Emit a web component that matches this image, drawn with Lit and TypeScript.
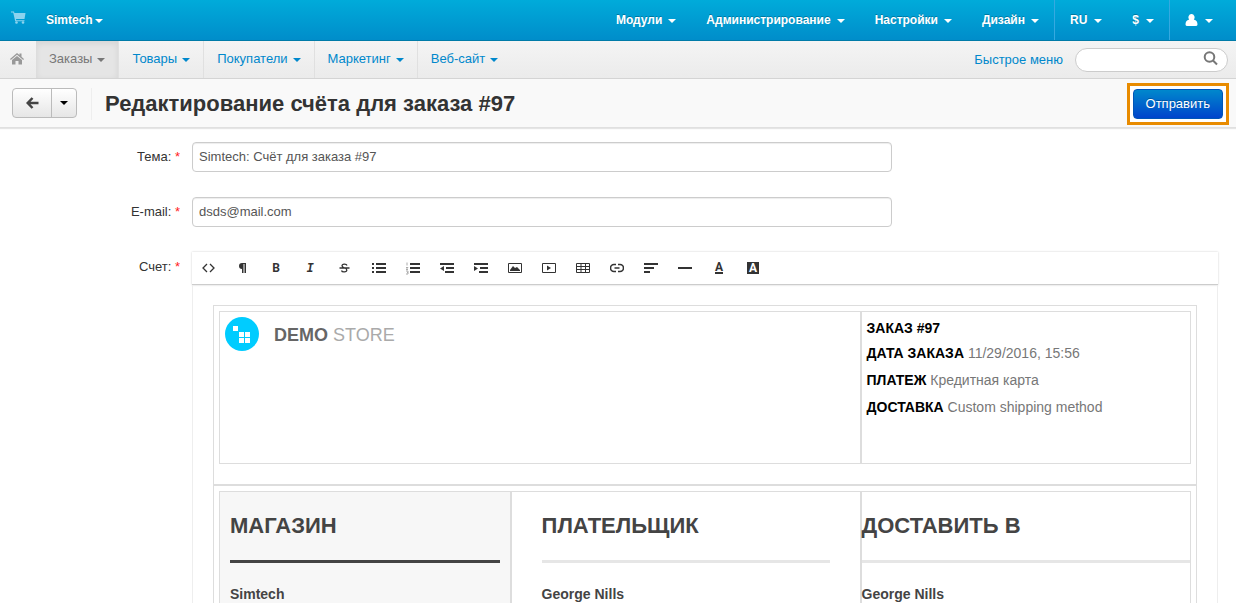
import { LitElement, html, svg, css } from "lit";
import { customElement, property } from "lit/decorators.js";

const tools = [
  { label: "HTML", icon: svg`<path d="M5 3 1 7l4 4M8 3l4 4-4 4" class="thin"/>` },
  { label: "Формат", icon: svg`<path d="M10 2v10H8.500V3H7.500v9H6V8a3 3 0 0 1 0-6z"/>` },
  { label: "Полужирный", icon: svg`<text x="6" y="11" class="g sans">B</text>` },
  { label: "Курсив", icon: svg`<text x="6" y="11" class="g mono">I</text>` },
  { label: "Зачёркнутый", icon: svg`<path d="M9 4.500C8.500 2.500 4 2.500 4 4.800 4 7 8.800 6.500 8.800 9 8.800 11.500 4 11.500 3.500 9.500M1.500 7h10" class="thin"/>` },
  { label: "Маркированный список", icon: svg`<path d="M0 2h2v2H0zM0 6h2v2H0zM0 10h2v2H0zM4 2h10v2H4zM4 6h10v2H4zM4 10h10v2H4z"/>` },
  { label: "Нумерованный список", icon: svg`<path d="M4 2h10v2H4zM4 6h10v2H4zM4 10h10v2H4z"/><path d="M1 1.500v3M0 6.500h2L0 8.500h2M0 10h2v3H0M1 11.500h1" class="faint"/>` },
  { label: "Уменьшить отступ", icon: svg`<path d="M0 2h14v2H0zM6 6h8v2H6zM5 10h9v2H5zM4 5v5L0 7.500z"/>` },
  { label: "Увеличить отступ", icon: svg`<path d="M0 2h14v2H0zM6 6h8v2H6zM5 10h9v2H5zM0 5v5l4-2.500z"/>` },
  { label: "Изображение", icon: svg`<path d="M.5 2.500h13v9H.5z" class="line"/><path d="M2 10V9l3-4 2 2 2-1 3 3v1z"/>` },
  { label: "Видео", icon: svg`<path d="M.5 2.500h13v9H.5z" class="line"/><path d="M5 4.500v5L9 7z"/>` },
  { label: "Таблица", icon: svg`<path d="M.5 2.500h13v9H.5zM0 5.500h14M0 8.500h14M5 2v10M9.500 2v10" class="line"/>` },
  { label: "Ссылка", icon: svg`<path d="M6 3.500H4a3.500 3.500 0 0 0 0 7h2M8 3.500h2a3.500 3.500 0 0 1 0 7H8M4.500 7h5" class="mid"/>` },
  { label: "Выравнивание", icon: svg`<path d="M0 2h14v2H0zM0 6h10v2H0zM0 10h6v2H0z"/>` },
  { label: "Линия", icon: svg`<path d="M0 6h14v2H0z"/>` },
  { label: "Цвет текста", icon: svg`<text x="7" y="10" class="g sans">A</text><path d="M3 11h8v2H3z"/>` },
  { label: "Цвет фона", icon: svg`<path d="M1 1h12v12H1z"/><text x="7" y="11" class="g sans white">A</text>` },
];

@customElement("menu-link")
export class MenuLink extends LitElement {
  @property() label = "";
  static styles = css`
    :host { display: flex; }
    a { display: flex; align-items: center; gap: var(--menu-gap, 6px); color: inherit; text-decoration: none; white-space: nowrap; }
    .caret { border: 4px solid transparent; border-top-color: currentColor; border-bottom: 0; margin-top: 2px; }
  `;
  render() {
    return html`<a href="#">${this.label}<slot></slot><span class="caret"></span></a>`;
  }
}

@customElement("app-root")
export class AppRoot extends LitElement {
  static styles = css`
    :host { display: flex; flex-direction: column; height: 100vh; overflow: hidden; background: #fff; color: #333; font: 13px/20px "Liberation Sans", Arial, sans-serif; }
    * { box-sizing: border-box; }
    button, input { font: inherit; margin: 0; }
    .top { flex: none; display: flex; align-items: stretch; height: 41px; padding-right: 8px; background: linear-gradient(#00abda, #008dca); border-bottom: 1px solid #007ba8; color: #fff; font-size: 12px; font-weight: bold; text-shadow: 0 -1px 0 rgba(0, 0, 0, 0.25); }
    .cart { display: flex; padding: 11px 0 0 11px; }
    .store { --menu-gap: 2px; margin-left: 19px; }
    .right { display: flex; margin-left: auto; }
    .right menu-link { padding: 0 15px; }
    .group { display: flex; border-left: 1px solid #36a9e0; }
    .group menu-link { --menu-gap: 7px; }
    .sub { flex: none; display: flex; height: 38px; padding-right: 8px; background: linear-gradient(#f4f4f4, #ebebeb); border-bottom: 1px solid #d4d4d4; color: #08c; }
    .home { display: flex; align-items: center; width: 36px; padding: 0 0 2px 10px; }
    .sub menu-link { --menu-gap: 5px; padding: 0 13px 2px; border-right: 1px solid #e0e0e0; }
    .sub menu-link:last-of-type { border: 0; }
    .sub .active { background: #e5e5e5; color: #777; box-shadow: inset 0 2px 6px rgba(0, 0, 0, 0.08); }
    .quick { margin-left: auto; align-self: center; color: #08c; text-decoration: none; }
    .search { position: relative; align-self: center; width: 153px; height: 24px; margin-left: 12px; }
    .search input { width: 100%; height: 100%; border: 1px solid #ccc; border-radius: 12px; background: #fff; padding: 0 30px 0 12px; outline: 0; }
    .search svg { position: absolute; right: 10px; top: 3px; }
    .bar { flex: none; display: flex; align-items: center; height: 49px; padding: 2px 7px 0 12px; background: #f9f9f9; border-bottom: 1px solid #e0e0e0; box-shadow: 0 1px 1px rgba(0, 0, 0, 0.1); }
    .split { display: flex; margin-bottom: 2px; border: 1px solid #bbb; border-radius: 4px; background: linear-gradient(#fff, #e6e6e6); }
    .split button { display: flex; align-items: center; justify-content: center; height: 28px; width: 38px; padding: 0; border: 0; background: none; }
    .split button + button { width: 25px; border-left: 1px solid #bbb; }
    .arrow { border: 4px solid transparent; border-top-color: #000; border-bottom: 0; }
    h1 { margin: 0 0 0 14px; padding-left: 13px; border-left: 1px solid #eee; font-size: 22px; line-height: 32px; }
    .frame { display: flex; margin-left: auto; padding: 3px; border: 3px solid #e88b00; background: #fff; }
    .send { height: 30px; padding: 0 12px; border: 1px solid #0055b8; border-radius: 4px; background: linear-gradient(#0088cc, #0044cc); color: #fff; text-shadow: 0 -1px 0 rgba(0, 0, 0, 0.25); }
    form { flex: 1; min-height: 0; overflow: hidden; display: flex; flex-direction: column; gap: 25px; padding: 14px 18px 0 0; }
    .row { display: grid; grid-template-columns: 180px minmax(0, 1fr); column-gap: 12px; }
    .row label, .name { text-align: right; line-height: 30px; }
    .req { color: #f22; }
    .row input { width: 100%; max-width: 700px; height: 30px; padding: 0 6px 2px; border: 1px solid #ccc; border-radius: 4px; color: #555; box-shadow: inset 0 1px 1px rgba(0, 0, 0, 0.075); }
    .tools { display: flex; height: 33px; background: #fff; border-bottom: 1px solid #ccc; box-shadow: 0 0 2px rgba(0, 0, 0, 0.2); }
    .tools button { display: flex; align-items: center; justify-content: center; width: 34px; padding: 0; border: 0; background: none; }
    .tools svg { fill: #333; }
    .thin, .mid, .line, .faint { fill: none; stroke: #333; }
    .thin { stroke-width: 1.3; }
    .mid { stroke-width: 1.6; }
    .faint { stroke: #aaa; }
    .g { font-weight: bold; font-size: 12px; text-anchor: middle; }
    .sans { font-family: Roboto, sans-serif; }
    .mono { font-family: "Liberation Mono", monospace; font-style: italic; }
    .tools .white { fill: #fff; }
    .doc { border: 1px solid #eee; border-top: 0; padding: 20px; }
    .block { border: 1px solid #ddd; padding: 5px 5px 20px; }
    .cols { display: grid; border: 0; }
    .head { grid-template-columns: 66fr 34fr; height: 153px; }
    .parties { grid-template-columns: 30fr 36fr 34fr; height: 200px; }
    .cols > div { min-width: 0; border: 1px solid #ddd; }
    .brand { display: flex; align-items: flex-start; gap: 15px; padding: 5px; color: #aaa; font-size: 18px; line-height: 36px; }
    .brand b { color: #666; }
    .brand svg { flex: none; }
    .info { padding: 4px 5px; color: #777; font-size: 14px; line-height: 27px; }
    .info p { margin: 0; }
    .info b { color: #000; }
    .info p:first-child { line-height: 24px; }
    .parties { color: #444; font-size: 14px; font-weight: bold; }
    .parties h2 { margin: 0 0 21px; padding: 18px 0; border-bottom: 3px solid #e6e6e6; font-size: 22px; line-height: 32px; }
    .parties .shop { background: #f7f7f7; padding: 0 10px; }
    .parties .shop h2 { border-color: #444; }
    .parties .payer { padding: 0 30px; }
  `;

  render() {
    return html`
      <nav class="top">
        <a class="cart" href="#" aria-label="Корзина"><svg width="16" height="14" viewBox="0 0 16 14" fill="#8cd3ee"><path d="M0 0.500h3l.4 1.500H14.500L13.500 8H5l.2 1.200H13.500v1H4.200L2.200 1.500H0z"/><circle cx="5.500" cy="11.500" r="1.300"/><circle cx="12" cy="11.500" r="1.300"/></svg></a>
        <menu-link class="store" label="Simtech"></menu-link>
        <div class="right">
          ${["Модули", "Администрирование", "Настройки", "Дизайн"].map((t) => html`<menu-link label=${t}></menu-link>`)}
          <div class="group"><menu-link label="RU"></menu-link><menu-link label="$"></menu-link></div>
          <div class="group"><menu-link><svg width="13" height="12" viewBox="0 0 13 12" fill="#fff"><path d="M6.500 0a3 3.300 0 0 1 2.300 5.500C11.500 6 12.500 8 12.500 10.500q0 1.500-2 1.500h-8q-2 0-2-1.500C.5 8 1.500 6 4.200 5.500A3 3.300 0 0 1 6.500 0z"/></svg></menu-link></div>
        </div>
      </nav>
      <nav class="sub">
        <a class="home" href="#" aria-label="Главная"><svg width="14" height="12" viewBox="0 0 14 12" fill="#999"><path d="M7 3 2 7v4.500h3.500V8h3v3.500H12V7z"/><path d="m0 6 7-6 2.500 2V.5h2v3.300L14 6l-.8.900L7 1.800.8 6.900z"/></svg></a>
        <menu-link class="active" label="Заказы"></menu-link>
        ${["Товары", "Покупатели", "Маркетинг", "Веб-сайт"].map((t) => html`<menu-link label=${t}></menu-link>`)}
        <a class="quick" href="#">Быстрое меню</a>
        <div class="search">
          <input type="search" aria-label="Поиск" />
          <svg width="15" height="15" viewBox="0 0 15 15" fill="none" stroke="#777" stroke-width="2"><circle cx="6.500" cy="6" r="4.800"/><path d="m10 9.500 4 4"/></svg>
        </div>
      </nav>
      <header class="bar">
        <div class="split">
          <button aria-label="Назад"><svg width="13" height="12" viewBox="0 0 13 12" fill="none" stroke="#444" stroke-width="2.500"><path d="M12.500 6H2M6.500 1 1.700 6l4.800 5"/></svg></button>
          <button aria-label="Меню"><span class="arrow"></span></button>
        </div>
        <h1>Редактирование счёта для заказа #97</h1>
        <div class="frame"><button class="send" type="submit" form="mail">Отправить</button></div>
      </header>
      <form id="mail">
        <div class="row"><label for="subject">Тема: <span class="req">*</span></label><input id="subject" value="Simtech: Счёт для заказа #97" /></div>
        <div class="row"><label for="email">E-mail: <span class="req">*</span></label><input id="email" value="dsds@mail.com" /></div>
        <div class="row">
          <span class="name">Счет: <span class="req">*</span></span>
          <div>
            <div class="tools">
              ${tools.map((t) => html`<button type="button" aria-label=${t.label}><svg width="14" height="14" viewBox="0 0 14 14">${t.icon}</svg></button>`)}
            </div>
            <div class="doc">
              <div class="block">
                <div class="cols head">
                  <div class="brand">
                    <svg width="34" height="34" viewBox="0 0 34 34"><circle cx="17" cy="17" r="17" fill="#0cf"/><path fill="#fff" d="M8 9h5v5H8zM14 15h5v5h-5zM20 15h5v5h-5zM14 21h5v5h-5zM20 21h5v5h-5z"/></svg>
                    <span><b>DEMO</b> STORE</span>
                  </div>
                  <div class="info">
                    <p><b>ЗАКАЗ #97</b></p>
                    <p><b>ДАТА ЗАКАЗА</b> 11/29/2016, 15:56</p>
                    <p><b>ПЛАТЕЖ</b> Кредитная карта</p>
                    <p><b>ДОСТАВКА</b> Custom shipping method</p>
                  </div>
                </div>
              </div>
              <div class="block">
                <div class="cols parties">
                  <div class="shop"><h2>МАГАЗИН</h2>Simtech</div>
                  <div class="payer"><h2>ПЛАТЕЛЬЩИК</h2>George Nills</div>
                  <div><h2>ДОСТАВИТЬ В</h2>George Nills</div>
                </div>
              </div>
            </div>
          </div>
        </div>
      </form>
    `;
  }
}
